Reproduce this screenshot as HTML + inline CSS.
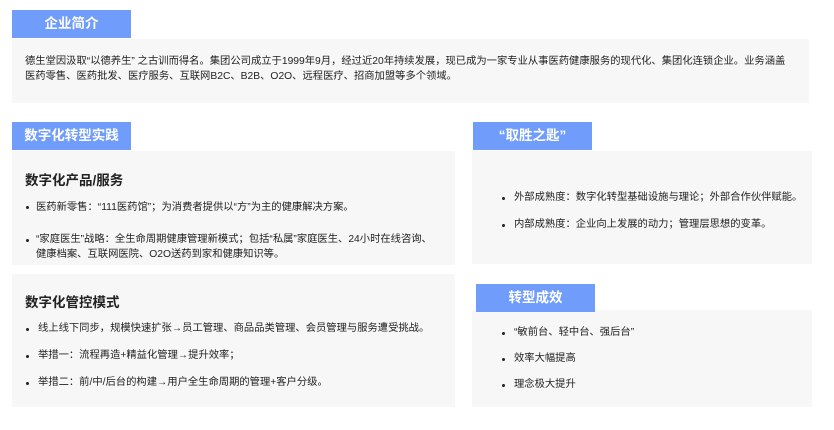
<!DOCTYPE html>
<html><head><meta charset="utf-8"><style>
body{margin:0;width:834px;height:430px;background:#fff;position:relative;overflow:hidden;font-family:"Liberation Sans","Noto Sans CJK SC",sans-serif;color:#222}
.tab{position:absolute;background:#709cfc;color:#fff;font-size:13.5px;font-weight:bold;text-align:center;line-height:28px;height:28px;width:119px}
.box{position:absolute;background:#f7f7f7}
.t{position:absolute;font-size:10.3px;white-space:nowrap;line-height:15px}
.h{position:absolute;font-size:13.5px;font-weight:bold;white-space:nowrap}
.b{position:absolute;width:3px;height:3px;border-radius:50%;background:#222}
</style></head><body>
<div class="box" style="left:12px;top:39px;width:797px;height:64px"></div>
<div class="tab" style="left:12px;top:10px">企业简介</div>
<div class="t" style="left:25px;top:54px">德生堂因汲取“以德养生” 之古训而得名。集团公司成立于1999年9月，经过近20年持续发展，现已成为一家专业从事医药健康服务的现代化、集团化连锁企业。业务涵盖<br>医药零售、医药批发、医疗服务、互联网B2C、B2B、O2O、远程医疗、招商加盟等多个领域。</div>

<div class="box" style="left:12px;top:151px;width:443px;height:114px"></div>
<div class="tab" style="left:12px;top:122px">数字化转型实践</div>
<div class="h" style="left:25px;top:169px">数字化产品/服务</div>
<div class="b" style="left:26px;top:206px"></div><div class="t" style="left:36px;top:200px">医药新零售：“111医药馆”；为消费者提供以“方”为主的健康解决方案。</div>
<div class="b" style="left:26px;top:239px"></div><div class="t" style="left:36px;top:232px">“家庭医生”战略：全生命周期健康管理新模式；包括“私属”家庭医生、24小时在线咨询、<br>健康档案、互联网医院、O2O送药到家和健康知识等。</div>

<div class="box" style="left:12px;top:274px;width:443px;height:133px"></div>
<div class="h" style="left:25px;top:291px">数字化管控模式</div>
<div class="b" style="left:26px;top:328px"></div><div class="t" style="left:38px;top:321px">线上线下同步，规模快速扩张→员工管理、商品品类管理、会员管理与服务遭受挑战。</div>
<div class="b" style="left:26px;top:355px"></div><div class="t" style="left:38px;top:348px">举措一：流程再造+精益化管理→提升效率；</div>
<div class="b" style="left:26px;top:382px"></div><div class="t" style="left:38px;top:375px">举措二：前/中/后台的构建→用户全生命周期的管理+客户分级。</div>

<div class="box" style="left:472px;top:151px;width:340px;height:113px"></div>
<div class="tab" style="left:473px;top:122px">“取胜之匙”</div>
<div class="b" style="left:502px;top:197px"></div><div class="t" style="left:514px;top:190px">外部成熟度：数字化转型基础设施与理论；外部合作伙伴赋能。</div>
<div class="b" style="left:502px;top:224px"></div><div class="t" style="left:514px;top:217px">内部成熟度：企业向上发展的动力；管理层思想的变革。</div>

<div class="box" style="left:472px;top:310px;width:340px;height:97px"></div>
<div class="tab" style="left:476px;top:284px">转型成效</div>
<div class="b" style="left:502px;top:332px"></div><div class="t" style="left:514px;top:325px">“敏前台、轻中台、强后台”</div>
<div class="b" style="left:502px;top:358px"></div><div class="t" style="left:514px;top:351px">效率大幅提高</div>
<div class="b" style="left:502px;top:384px"></div><div class="t" style="left:514px;top:377px">理念极大提升</div>
</body></html>
